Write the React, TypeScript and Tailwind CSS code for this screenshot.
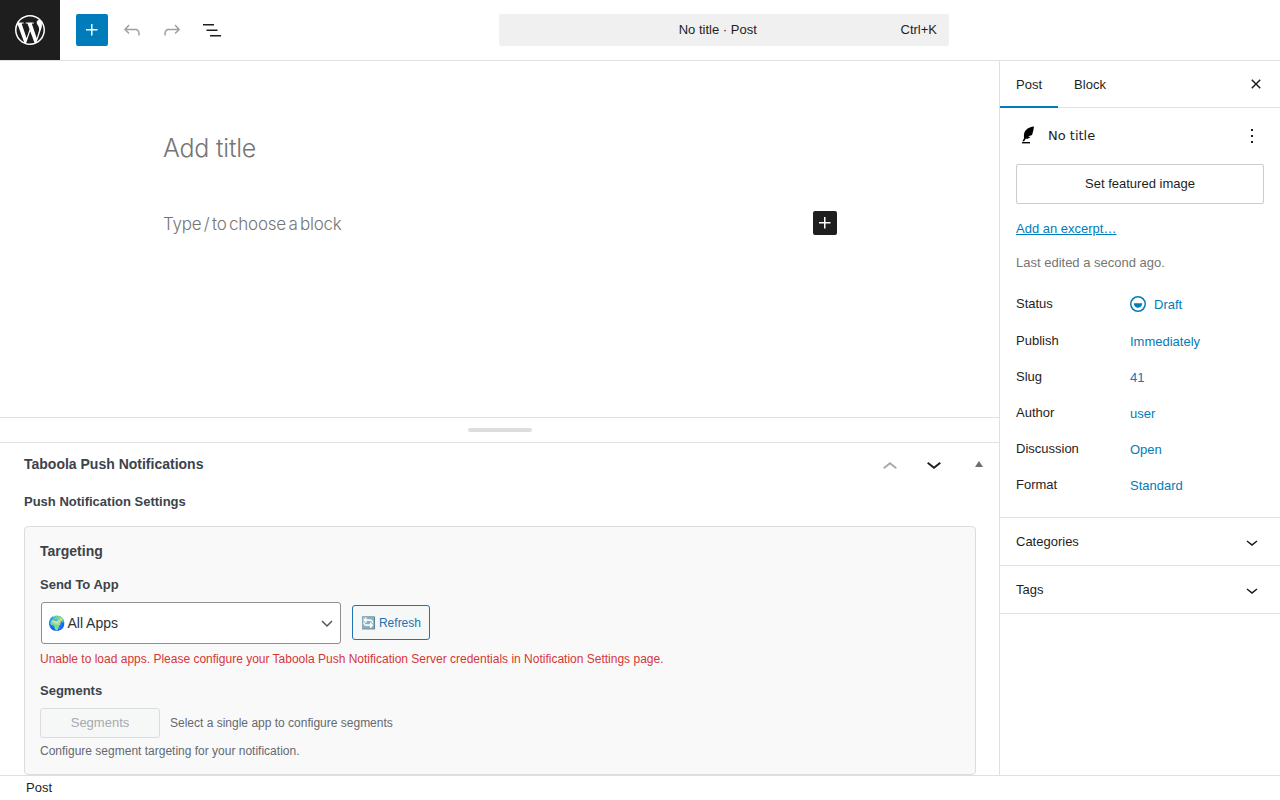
import { SiWordpress } from "react-icons/si";

const PLUS = "M11 12.5V17.5H12.5V12.5H17.5V11H12.5V6H11V11H6V12.5H11Z";
const DOWN = "M17.5 11.6L12 16l-5.5-4.4.9-1.2L12 14l4.5-3.6 1 1.2z";
const UP = "M6.5 12.4L12 8l5.5 4.4-.9 1.2L12 10l-4.5 3.6-1-1.2z";

function Icon({ d, size = 24, className = "" }: { d: string; size?: number; className?: string }) {
  return (
    <svg viewBox="0 0 24 24" width={size} height={size} fill="currentColor" className={className}>
      <path d={d} />
    </svg>
  );
}

function Row({ label, value, draft }: { label: string; value: string; draft?: boolean }) {
  return (
    <div className={`flex ${draft ? "h-[37px]" : "h-9"}`}>
      <div className="w-[114px] leading-[18px]">{label}</div>
      <div className="flex items-start gap-2 pt-px leading-[18px] text-[#007cba]">
        {draft && (
          <svg viewBox="0 0 16 16" width="16" height="16" className="shrink-0 text-[#007cba]">
            <circle cx="8" cy="8" r="7.25" fill="none" stroke="currentColor" strokeWidth="1.5" />
            <path d="M3.8 7.2h8.4a4.2 4.6 0 0 1-8.4 0z" fill="currentColor" />
          </svg>
        )}
        <span>{value}</span>
      </div>
    </div>
  );
}

export default function App() {
  return (
    <div className="flex h-screen w-full flex-col overflow-hidden bg-white font-['Liberation_Sans',Arial,sans-serif] text-[13px] text-[#1e1e1e]">
      <header className="flex h-[61px] shrink-0 border-b border-[#e0e0e0]">
        <div className="flex h-[60px] w-[60px] items-center justify-center bg-[#1e1e1e] text-white">
          <SiWordpress size={30} />
        </div>
        <div className="relative flex flex-1 items-center pl-4">
          <div className="flex h-8 w-8 items-center justify-center rounded-[2px] bg-[#007cba] text-white">
            <Icon d={PLUS} />
          </div>
          <div className="ml-2 flex h-8 w-8 items-center justify-center text-[#a0a0a0]">
            <Icon d="M18.3 11.7c-.6-.6-1.4-.9-2.3-.9H6.7l2.9-3.3-1.1-1-4.5 5L8.5 16l1-1-2.7-2.7H16c.5 0 .9.2 1.3.5 1 1 1 3.4 1 4.5v.3h1.5v-.2c0-1.5 0-4.3-1.5-5.7z" />
          </div>
          <div className="ml-2 flex h-8 w-8 items-center justify-center text-[#a0a0a0]">
            <Icon d="M15.6 6.5l-1.1 1 2.9 3.3H8c-.9 0-1.7.3-2.3.9-1.4 1.5-1.4 4.2-1.4 5.6v.2h1.5v-.3c0-1.1 0-3.5 1-4.5.3-.3.7-.5 1.3-.5h9.2L14.5 15l1.1 1.1 4.6-4.6-4.6-5z" />
          </div>
          <div className="ml-2 flex h-8 w-8 items-center justify-center">
            <Icon d="M3 6h11v1.5H3V6Zm3.5 5.5h11V13h-11v-1.5ZM21 17H10v1.5h11V17Z" />
          </div>
          <div className="absolute left-[439px] top-[14px] flex h-8 w-[450px] items-center rounded-[2px] bg-[#f0f0f0] pr-3">
            <span className="flex-1 pl-9 text-center">No title · Post</span>
            <span>Ctrl+K</span>
          </div>
        </div>
      </header>

      <div className="flex min-h-0 flex-1">
        <main className="flex min-w-0 flex-1 flex-col">
          <section className="h-[356px] shrink-0 pl-[163px] pr-[162px]">
            <div className="pt-[71px] font-['Inter',sans-serif] text-[25px] font-light leading-[32px] tracking-[-0.2px] text-[#757575]">Add title</div>
            <div className="mt-[47px] flex items-start justify-between font-['Inter',sans-serif] text-[17px] font-light tracking-[-0.25px] text-[#757575]">
              <span className="pt-px [word-spacing:-2px]">Type / to choose a block</span>
              <div className="flex h-6 w-6 items-center justify-center rounded-[2px] bg-[#1e1e1e] text-white">
                <Icon d={PLUS} />
              </div>
            </div>
          </section>
          <div className="flex h-[26px] shrink-0 items-center justify-center border-y border-[#e0e0e0]">
            <div className="h-1 w-16 rounded-sm bg-[#ddd]" />
          </div>
          <section className="relative min-h-0 flex-1 overflow-hidden pl-6 pr-[23px]">
            <div className="flex h-[42px] items-center justify-between">
              <h2 className="text-[14px] font-bold text-[#3c434a]">Taboola Push Notifications</h2>
              <div className="absolute right-[-1px] top-0 flex h-[42px] items-center">
                <div className="mt-[6px] flex w-11 justify-center text-[#a7aaad]"><Icon d={UP} size={30} /></div>
                <div className="mb-px flex w-11 justify-center text-[#1e1e1e]"><Icon d={DOWN} size={30} /></div>
                <div className="flex w-11 justify-center pl-[2px]">
                  <span className="h-0 w-0 border-x-[4.5px] border-b-[6px] border-x-transparent border-b-[#6b6f73]" />
                </div>
              </div>
            </div>
            <h3 className="mt-2 font-bold leading-[18px] text-[#3c434a]">Push Notification Settings</h3>
            <div className="mt-[15px] h-[249px] rounded border border-[#dcdcde] bg-[#f9f9f9] px-[15px] pt-[15px]">
              <h4 className="text-[14px] font-bold leading-[18px] text-[#3c434a]">Targeting</h4>
              <div className="mt-[17px] font-bold leading-[16px] text-[#3c434a]">Send To App</div>
              <div className="mt-[9px] flex items-start">
                <div className="ml-px flex h-[42px] w-[300px] items-center justify-between rounded-[3px] border border-[#8c8f94] bg-white pl-[6px] pr-[5px] text-[14px] text-[#2c3338]">
                  <span className="flex items-center gap-[2px]">
                    <span className="font-['Noto_Color_Emoji',sans-serif] text-[14px]">🌍</span>All Apps
                  </span>
                  <svg viewBox="0 0 16 16" width="16" height="16" fill="none" stroke="#50575e" strokeWidth="1.5"><path d="M3 6l5 5 5-5" /></svg>
                </div>
                <div className="ml-[11px] mt-[3px] flex h-[35px] w-[78px] items-center justify-center gap-[3px] rounded-[3px] border border-[#2271b1] bg-[#f6f7f7] text-[12px] text-[#2271b1]">
                  <span className="font-['Noto_Color_Emoji',sans-serif]">🔄</span>Refresh
                </div>
              </div>
              <p className="mt-[7px] text-[12px] leading-[16px] text-[#d63638]">Unable to load apps. Please configure your Taboola Push Notification Server credentials in Notification Settings page.</p>
              <div className="mt-4 font-bold leading-[16px] text-[#3c434a]">Segments</div>
              <div className="mt-[9px] flex items-center gap-[10px]">
                <div className="flex h-[30px] w-[120px] items-center justify-center rounded-[3px] border border-[#dcdcde] bg-[#f6f7f7] text-[#a7aaad]">Segments</div>
                <span className="text-[12px] text-[#646970]">Select a single app to configure segments</span>
              </div>
              <p className="mt-[5px] text-[12px] leading-[16px] text-[#646970]">Configure segment targeting for your notification.</p>
            </div>
          </section>
        </main>

        <aside className="w-[281px] shrink-0 border-l border-[#e0e0e0]">
          <div className="flex h-[47px] items-center border-b border-[#e0e0e0]">
            <div className="relative flex h-[46px] w-[58px] items-center justify-center pt-px">
              Post
              <span className="absolute inset-x-0 bottom-[-1px] h-[2px] bg-[#007cba]" />
            </div>
            <div className="flex h-[46px] w-[64px] items-center justify-center pt-px">Block</div>
            <div className="ml-auto mr-3"><Icon d="M12 13.06l3.712 3.713 1.061-1.06L13.061 12l3.712-3.712-1.06-1.06L12 10.938 8.288 7.227l-1.061 1.06L10.939 12l-3.712 3.712 1.06 1.061L12 13.061z" /></div>
          </div>
          <div className="h-[410px] border-b border-[#e0e0e0] px-4">
            <div className="flex h-14 items-center">
              <svg viewBox="0 0 24 24" width="24" height="24" fill="#000" className="shrink-0">
                <path d="M18 2.5C13 3 8.5 5.5 8 10.5c-.2 1.5 0 2.5.2 3.5l-1.7 3 1.5.5 1.7-2.8c1.3.3 3.3-.2 4.8-1.7l-2.5-.5 4-1.5c1-2.5 1.5-5.5 2-8.5z" />
                <path d="M6 18h8v1.4H6z" />
              </svg>
              <span className="ml-2 font-['DejaVu_Sans',sans-serif] text-[13px] text-[#1e1e1e]">No title</span>
              <Icon d="M13 19h-2v-2h2v2zm0-6h-2v-2h2v2zm0-6h-2V5h2v2z" className="ml-auto" />
            </div>
            <div className="flex h-10 items-center justify-center rounded-[2px] border border-[#ccc]">Set featured image</div>
            <div className="mt-4 leading-[18px] text-[#007cba] underline">Add an excerpt…</div>
            <div className="mt-4 leading-[18px] text-[#757575]">Last edited a second ago.</div>
            <div className="mt-[23px]">
              <Row label="Status" value="Draft" draft />
              <Row label="Publish" value="Immediately" />
              <Row label="Slug" value="41" />
              <Row label="Author" value="user" />
              <Row label="Discussion" value="Open" />
              <Row label="Format" value="Standard" />
            </div>
          </div>
          <div className="flex h-12 items-center justify-between border-b border-[#e0e0e0] pl-4 pr-4">
            <span>Categories</span>
            <Icon d={DOWN} />
          </div>
          <div className="flex h-12 items-center justify-between border-b border-[#e0e0e0] pl-4 pr-4">
            <span>Tags</span>
            <Icon d={DOWN} />
          </div>
        </aside>
      </div>

      <footer className="flex h-[25px] shrink-0 items-center border-t border-[#e0e0e0] pl-[26px]">Post</footer>
    </div>
  );
}
